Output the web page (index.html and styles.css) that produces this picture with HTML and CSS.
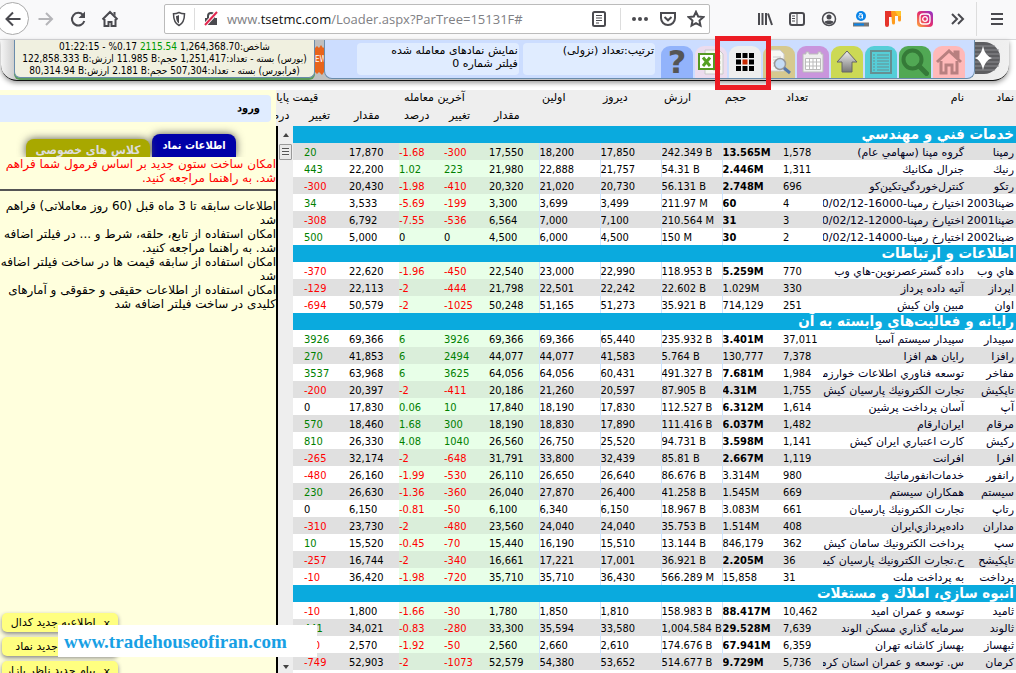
FILE: index.html
```
<!DOCTYPE html>
<html lang="fa">
<head>
<meta charset="utf-8">
<title>دیده بان بازار</title>
<link rel="stylesheet" href="styles.css">
</head>
<body>
<header class="browser">
  <div class="nav">
    <button class="back" aria-label="Back"><svg width="18" height="18" viewBox="0 0 18 18"><path d="M9 2.5 2.5 9 9 15.500M3 9h13.500" class="ln"/></svg></button>
    <button class="ib" aria-label="Forward"><svg width="18" height="18" viewBox="0 0 18 18"><path d="M9 3l6 6-6 6M15 9H1.500" class="ln pale"/></svg></button>
    <button class="ib" aria-label="Reload"><svg width="18" height="18" viewBox="0 0 18 18"><path d="M14 5a6.300 6.300 0 1 0 1.300 6" class="ln"/><path d="M16 1.500v6.500H9.500z" fill="#4a4a4f"/></svg></button>
    <button class="ib" aria-label="Home"><svg width="18" height="18" viewBox="0 0 18 18"><path d="M1.500 9.500 9 2l7.500 7.500M3.500 9v7h4v-4h3v4h4V9" class="ln"/><path d="M12.500 2h2v4l-2-2z" fill="#4a4a4f"/></svg></button>
  </div>
  <div class="urlbar">
    <svg width="14" height="16" viewBox="0 0 14 16"><path d="M7 1.500C5 2.500 3 2.800 1.500 2.800c0 6 1 9.500 5.500 11.700 4.500-2.200 5.500-5.700 5.500-11.700C11 2.800 9 2.500 7 1.500z" class="ln mid"/><path d="M7 4v8.500C4.800 11 4 8.500 4 5c1 0 2-.3 3-1z" fill="#4a4a4f"/></svg>
    <i class="bar"></i>
    <svg width="16" height="16" viewBox="0 0 16 16"><path d="M2 7h12v7H2z" fill="#4a4a4f"/><path d="M5 7V5a3 3 0 0 1 6 0v2" class="ln"/><path d="M2 14 14 1" stroke="#fff" stroke-width="4"/><path d="M2 14 14 1" stroke="#e22850" stroke-width="2"/></svg>
    <a class="address" href="#">www.<b>tsetmc.com</b>/Loader.aspx?ParTree=15131F#</a>
    <button class="ib sm" aria-label="Reader view"><svg width="16" height="16" viewBox="0 0 16 16"><rect x="2" y="1" width="12" height="14" rx="1.500" class="ln"/><path d="M5 4.500h6M5 7h6M5 9.500h6M5 12h3" class="ln thin"/></svg></button>
    <i class="bar short"></i>
    <button class="ib sm" aria-label="Page actions"><svg width="18" height="16" viewBox="0 0 18 16"><g fill="#4a4a4f"><circle cx="3" cy="8" r="2"/><circle cx="9" cy="8" r="2"/><circle cx="15" cy="8" r="2"/></g></svg></button>
    <button class="ib sm" aria-label="Save to Pocket"><svg width="16" height="16" viewBox="0 0 16 16"><path d="M1 2h14v5a7 7 0 0 1-14 0z" class="ln"/><path d="M4.500 6 8 9.300 11.500 6" class="ln"/></svg></button>
    <button class="ib sm" aria-label="Bookmark"><svg width="18" height="18" viewBox="0 0 18 18"><path d="M9 1.800l2.200 4.700 5.100.6-3.800 3.500 1 5.100L9 13.200l-4.500 2.500 1-5.100L1.700 7.100l5.100-.6z" class="ln"/></svg></button>
  </div>
  <div class="ext">
    <button class="ib sm" aria-label="Library"><svg width="16" height="16" viewBox="0 0 16 16"><path d="M2 2v12M5.500 2v12M9 2v12M11 2.500 15 14" class="ln"/></svg></button>
    <button class="ib sm" aria-label="Sidebars"><svg width="16" height="16" viewBox="0 0 16 16"><rect x="1" y="2" width="14" height="12" rx="2" class="ln"/><path d="M8 2v12M3 5h3M3 7.500h3M3 10h3" class="ln thin"/></svg></button>
    <button class="ib sm" aria-label="Account"><svg width="16" height="16" viewBox="0 0 16 16"><circle cx="8" cy="8" r="6.500" class="ln mid"/><circle cx="8" cy="6" r="2.500" fill="#4a4a4f"/><path d="M3.500 11c1-2 8-2 9 0-2 3-7 3-9 0z" fill="#4a4a4f"/></svg></button>
    <button class="ib sm" aria-label="Alexa"><svg width="16" height="16" viewBox="0 0 16 16"><circle cx="8" cy="5" r="5" fill="#0a84e8"/><circle cx="7.500" cy="5.500" r="1.700" fill="none" stroke="#fff"/><path d="M6 2.800q3.500-1 3.500 1.200v3.500" fill="none" stroke="#fff"/><path d="M0 11.500h16v4H0z" fill="#777"/><path d="M1 12.500h10v2H1z" fill="#0a84e8"/></svg></button>
    <button class="ib sm" aria-label="Metrics"><svg width="18" height="16" viewBox="0 0 18 16"><path d="M1 0h8v6H5v8a2 2 0 0 1-4 0z" fill="#e5342b"/><path d="M7 0h10v9a1.500 1.500 0 0 1-3 0V5h-3v7a1.500 1.500 0 0 1-3 0z" fill="#ff9c1c"/><path d="M11 0h6v5h-3z" fill="#ffc62c"/></svg></button>
    <button class="ib sm" aria-label="Instagram"><svg width="16" height="16" viewBox="0 0 16 16"><defs><linearGradient id="ig" x1="0" y1="1" x2="1" y2="0"><stop offset="0" stop-color="#ffb03a"/><stop offset=".5" stop-color="#e52d6e"/><stop offset="1" stop-color="#8b35d0"/></linearGradient></defs><rect width="16" height="16" rx="4" fill="url(#ig)"/><rect x="3" y="3" width="10" height="10" rx="3" fill="none" stroke="#fff" stroke-width="1.300"/><circle cx="8" cy="8" r="2.300" fill="none" stroke="#fff" stroke-width="1.300"/></svg></button>
    <button class="ib sm" aria-label="More tools"><svg width="16" height="16" viewBox="0 0 16 16"><path d="M3 3l5 5-5 5M9 3l5 5-5 5" class="ln"/></svg></button>
    <i class="bar tall"></i>
    <button class="ib sm" aria-label="Menu"><svg width="16" height="16" viewBox="0 0 16 16"><path d="M2 3h12M2 8h12M2 13h12" class="ln"/></svg></button>
  </div>
</header>

<section class="top">
  <div class="shell">
    <div class="stats" dir="rtl">
      <div>شاخص:<bdi>1,264,368.70</bdi> <bdi class="gain">2115.54</bdi> <bdi dir="ltr">%0.17</bdi> - <bdi dir="ltr">01:22:15</bdi></div>
      <div>(بورس) بسته - تعداد:<bdi>1,251,417</bdi> حجم:<bdi dir="ltr">11.985 B</bdi> ارزش:<bdi dir="ltr">122,858.333 B</bdi></div>
      <div>(فرابورس) بسته - تعداد:<bdi>507,304</bdi> حجم:<bdi dir="ltr">2.181 B</bdi> ارزش:<bdi dir="ltr">80,314.94 B</bdi></div>
    </div>
    <div class="burst"><svg width="14" height="32" viewBox="0 0 14 32"><path d="M0 3l2-2 2 2 2-3 2 3 3-2 3 2v24l-3 2-2-2-2 3-3-3-2 2-2-2z" fill="#e8641c"/></svg><span>EW</span></div>
    <div class="toolbar">
      <div class="info wide" dir="rtl">نمایش نمادهای معامله شده<br>فیلتر شماره 0</div>
      <div class="info" dir="rtl">ترتیب:تعداد (نزولی)</div>
      <div class="tools">
        <button class="t help" aria-label="راهنما">?</button>
        <button class="t excel" aria-label="اکسل"><svg width="26" height="26" viewBox="0 0 26 26"><path d="M7 1h14l4 4v20H7z" fill="#f6f6f2" stroke="#c8c8c8"/><path d="M15 6h7v4h-7zM15 12h7v3h-7zM15 17h7v4h-7z" fill="#e5efd5" stroke="#c5cfb5"/><rect x="1" y="5" width="15" height="15" fill="#fff" stroke="#559922" stroke-width="2"/><path d="M5 8.500 12 17M12 8.500 5 17" stroke="#55a022" stroke-width="3"/></svg></button>
        <button class="t view" aria-label="نمایش"><svg width="18" height="18" viewBox="0 0 18 18"><path d="M0 0h5v5H0zM6.500 0h5v5h-5zM13 0h5v5h-5zM0 6.500h5v5H0zM13 6.500h5v5h-5zM0 13h5v5H0zM6.500 13h5v5h-5zM13 13h5v5h-5z"/><path d="M6.500 6.500h5v5h-5z" fill="#c82800"/></svg></button>
        <button class="t find" aria-label="جستجو در صفحه"><svg width="26" height="26" viewBox="0 0 26 26"><path d="M4 1h10l4 4v17H4z" fill="#f7f7f4" stroke="#ccc"/><path d="M7 8h8M7 11h6M7 14h5M7 17h6" stroke="#ccc"/><circle cx="14" cy="15" r="5.500" fill="#c5dcf5" stroke="#999" stroke-width="1.500"/><path d="M18 19l6 5" stroke="#5577aa" stroke-width="3"/></svg></button>
        <button class="t cal" aria-label="تقویم"><svg width="24" height="24" viewBox="0 0 24 24"><path d="M2 4h3V2h3v2h9V2h3v2h2v18H2z" fill="#eee" stroke="#bbb"/><path d="M4.500 8.500h15v11h-15z" fill="#fff" stroke="#bbb"/><path d="M4.500 12h15M4.500 16h15M8.500 8.500v11M12 8.500v11M15.500 8.500v11" stroke="#bbb"/></svg></button>
        <button class="t asc" aria-label="بالا"><svg width="24" height="24" viewBox="0 0 24 24"><defs><linearGradient id="ar" x2="0" y2="1"><stop stop-color="#eee"/><stop offset="1" stop-color="#777"/></linearGradient></defs><path d="M12 1 22 12h-5v10H7V12H2z" fill="url(#ar)" stroke="#666"/></svg></button>
        <button class="t list" aria-label="فهرست"><svg width="24" height="24" viewBox="0 0 24 24"><rect x="2" y="1" width="20" height="22" fill="none" stroke="#668f92" stroke-width="2"/><path d="M8 5h12M8 8h12M8 11h12M8 14h12M8 17h12M8 20h12M4 5h2M4 8h2M4 11h2M4 14h2M4 17h2M4 20h2" stroke="#668f92"/></svg></button>
        <button class="t search" aria-label="جستجو"><svg width="28" height="28" viewBox="0 0 28 28"><circle cx="11.500" cy="11.500" r="9" fill="none" stroke="#357a38" stroke-width="4"/><path d="M18 18l7.500 7.500" stroke="#357a38" stroke-width="5" stroke-linecap="round"/></svg></button>
        <button class="t home" aria-label="خانه"><svg width="28" height="26" viewBox="0 0 28 26"><path d="M2 13 14 2l12 11M20 7V3h3v7" fill="none" stroke="#b88080" stroke-width="3"/><path d="M6 12v12h5v-8h6v8h5V12" fill="none" stroke="#b88080" stroke-width="3"/></svg></button>
      </div>
    </div>
    <div class="seal"><svg width="28" height="34" viewBox="0 0 28 34"><path d="M0 1h9a16 16 0 0 1 0 32H0z" fill="#5d5d60"/><path d="M0 5h20M0 9h24M0 13h25M0 17h25M0 21h25M0 25h24M0 29h20" stroke="#8d8d90"/><path d="M8 5q2 10 9 12-7 2-9 12Q6 19 0 17 6 15 8 5z" fill="#fff"/></svg></div>
  </div>
</section>

<main class="page">
  <aside class="side" dir="rtl">
    <button class="login">ورود</button>
    <div class="tabs"><button class="tab on">اطلاعات نماد</button><button class="tab">کلاس های خصوصی</button></div>
    <div class="news">
      <p class="hot">امکان ساخت ستون جدید بر اساس فرمول شما فراهم شد. به راهنما مراجعه کنید.</p>
      <hr>
      <p>اطلاعات سابقه تا 3 ماه قبل (60 روز معاملاتی) فراهم شد</p>
      <p>امکان استفاده از تابع، حلقه، شرط و ... در فیلتر اضافه شد. به راهنما مراجعه کنید.</p>
      <p>امکان استفاده از سابقه قیمت ها در ساخت فیلتر اضافه شد</p>
      <p>امکان استفاده از اطلاعات حقیقی و حقوقی و آمارهای کلیدی در ساخت فیلتر اضافه شد</p>
    </div>
    <div class="notes">
      <div class="note"><button aria-label="بستن">x</button><span>اطلاعیه جدید کدال</span></div>
      <div class="note"><button aria-label="بستن">x</button><span>اطلاعیه جدید نماد</span></div>
      <div class="note"><button aria-label="بستن">x</button><span>پیام جدید ناظر بازار</span></div>
    </div>
  </aside>
  <section class="grid" dir="rtl">
    <table>
      <colgroup><col class="w50"><col><col class="w40"><col class="w61"><col class="w61"><col class="w61"><col class="w61"><col class="w50"><col class="w45"><col class="w45"><col class="w50"><col class="w45"><col class="w45"></colgroup>
      <thead>
        <tr><th class="r">نماد<th class="r">نام<th>تعداد<th>حجم<th>ارزش<th>دیروز<th>اولین<th colspan="3">آخرین معامله<th colspan="3">قیمت پایانی</tr>
        <tr><th><th><th><th><th><th><th><th>مقدار<th>تغییر<th>درصد<th>مقدار<th>تغییر<th>درصد</tr>
      </thead>
      <tbody>
        <tr class="g"><td colspan="13">خدمات فني و مهندسي</tr>
        <tr><td>رمپنا<td>گروه مپنا (سهامي عام)<td>1,578<td class="b">13.565M<td>242.349 B<td>17,850<td>18,200<td>17,550<td class="dn">-300<td class="dn">-1.68<td>17,870<td class="up">20<td></tr>
        <tr><td>رنيك<td>جنرال مكانيك<td>1,311<td class="b">2.446M<td>54.31 B<td>21,757<td>22,888<td>21,980<td class="up">223<td class="up">1.02<td>22,200<td class="up">443<td></tr>
        <tr><td>رتكو<td>كنترل‌خوردگي‌تكين‌كو<td>696<td class="b">2.748M<td>56.131 B<td>20,730<td>21,020<td>20,320<td class="dn">-410<td class="dn">-1.98<td>20,430<td class="dn">-300<td></tr>
        <tr><td>ضپنا2003<td>اختيارخ رمپنا-16000-1400/02/12<td>4<td class="b">60<td>211.97 M<td>3,499<td>3,699<td>3,300<td class="dn">-199<td class="dn">-5.69<td>3,533<td class="up">34<td></tr>
        <tr><td>ضپنا2001<td>اختيارخ رمپنا-12000-1400/02/12<td>3<td class="b">31<td>210.564 M<td>7,100<td>7,000<td>6,564<td class="dn">-536<td class="dn">-7.55<td>6,792<td class="dn">-308<td></tr>
        <tr><td>ضپنا2002<td>اختيارخ رمپنا-14000-1400/02/12<td>2<td class="b">30<td>150 M<td>4,500<td>6,000<td>4,500<td>0<td>0<td>5,000<td class="up">500<td></tr>
        <tr class="g"><td colspan="13">اطلاعات و ارتباطات</tr>
        <tr><td>هاي وب<td>داده گسترعصرنوين-هاي وب<td>770<td class="b">5.259M<td>118.953 B<td>22,990<td>23,000<td>22,540<td class="dn">-450<td class="dn">-1.96<td>22,620<td class="dn">-370<td></tr>
        <tr><td>اپرداز<td>آتيه داده پرداز<td>330<td>1.029M<td>22.602 B<td>22,242<td>22,501<td>21,798<td class="dn">-444<td class="dn">-2<td>22,113<td class="dn">-129<td></tr>
        <tr><td>اوان<td>مبين وان كيش<td>251<td>714,129<td>35.921 B<td>51,273<td>51,165<td>50,248<td class="dn">-1025<td class="dn">-2<td>50,579<td class="dn">-694<td></tr>
        <tr class="g"><td colspan="13">رايانه و فعاليت‌هاي وابسته به آن</tr>
        <tr><td>سپيدار<td>سپيدار سيستم آسيا<td>37,011<td class="b">3.401M<td>235.932 B<td>65,440<td>69,366<td>69,366<td class="up">3926<td class="up">6<td>69,366<td class="up">3926<td></tr>
        <tr><td>رافزا<td>رايان هم افزا<td>7,378<td>130,777<td>5.764 B<td>41,583<td>44,077<td>44,077<td class="up">2494<td class="up">6<td>41,853<td class="up">270<td></tr>
        <tr><td>مفاخر<td>توسعه فناوري اطلاعات خوارزمي<td>1,984<td class="b">7.681M<td>491.327 B<td>60,431<td>64,056<td>64,056<td class="up">3625<td class="up">6<td>63,968<td class="up">3537<td></tr>
        <tr><td>تاپكيش<td>تجارت الكترونيك پارسيان كيش<td>1,755<td class="b">4.31M<td>87.905 B<td>20,597<td>21,260<td>20,186<td class="dn">-411<td class="dn">-2<td>20,397<td class="dn">-200<td></tr>
        <tr><td>آپ<td>آسان پرداخت پرشين<td>1,614<td class="b">6.312M<td>112.527 B<td>17,830<td>18,190<td>17,840<td class="up">10<td class="up">0.06<td>17,830<td>0<td></tr>
        <tr><td>مرقام<td>ايران‌ارقام<td>1,482<td class="b">6.037M<td>111.416 B<td>17,890<td>18,830<td>18,190<td class="up">300<td class="up">1.68<td>18,460<td class="up">570<td></tr>
        <tr><td>ركيش<td>كارت اعتباري ايران كيش<td>1,141<td class="b">3.598M<td>94.731 B<td>25,520<td>26,750<td>26,560<td class="up">1040<td class="up">4.08<td>26,330<td class="up">810<td></tr>
        <tr><td>افرا<td>افرانت<td>1,119<td class="b">2.667M<td>85.81 B<td>32,439<td>33,800<td>31,791<td class="dn">-648<td class="dn">-2<td>32,174<td class="dn">-265<td></tr>
        <tr><td>رانفور<td>خدمات‌انفورماتيك<td>980<td>3.314M<td>86.676 B<td>26,640<td>26,650<td>26,110<td class="dn">-530<td class="dn">-1.99<td>26,160<td class="dn">-480<td></tr>
        <tr><td>سيستم<td>همكاران سيستم<td>669<td>1.545M<td>41.258 B<td>26,400<td>27,870<td>26,040<td class="dn">-360<td class="dn">-1.36<td>26,630<td class="up">230<td></tr>
        <tr><td>رتاپ<td>تجارت الكترونيك پارسيان<td>661<td>3.083M<td>18.967 B<td>6,150<td>6,340<td>6,100<td class="dn">-50<td class="dn">-0.81<td>6,150<td>0<td></tr>
        <tr><td>مداران<td>داده‌پردازي‌ايران<td>408<td>1.514M<td>35.753 B<td>24,040<td>24,040<td>23,560<td class="dn">-480<td class="dn">-2<td>23,730<td class="dn">-310<td></tr>
        <tr><td>سپ<td>پرداخت الكترونيك سامان كيش<td>362<td>846,179<td>13.144 B<td>15,510<td>16,190<td>15,440<td class="dn">-70<td class="dn">-0.45<td>15,520<td class="up">10<td></tr>
        <tr><td>تاپكيشح<td>ح.تجارت الكترونيك پارسيان كيش<td>36<td class="b">2.205M<td>36.921 B<td>17,001<td>17,221<td>16,661<td class="dn">-340<td class="dn">-2<td>16,744<td class="dn">-257<td></tr>
        <tr><td>پرداخت<td>به پرداخت ملت<td>31<td>15,858<td>566.289 M<td>36,430<td>35,710<td>35,710<td class="dn">-720<td class="dn">-1.98<td>36,420<td class="dn">-10<td></tr>
        <tr class="g"><td colspan="13">انبوه سازي، املاك و مستغلات</tr>
        <tr><td>ثاميد<td>توسعه و عمران اميد<td>10,462<td class="b">88.417M<td>158.983 B<td>1,810<td>1,850<td>1,780<td class="dn">-30<td class="dn">-1.66<td>1,800<td class="dn">-10<td></tr>
        <tr><td>ثالوند<td>سرمايه گذاري مسكن الوند<td>7,639<td class="b">29.528M<td>1,004.584 B<td>33,580<td>35,594<td>33,300<td class="dn">-280<td class="dn">-0.83<td>34,021<td class="up">441<td></tr>
        <tr><td>ثبهساز<td>بهساز كاشانه تهران<td>6,359<td class="b">67.941M<td>174.676 B<td>2,610<td>2,660<td>2,560<td class="dn">-50<td class="dn">-1.92<td>2,570<td class="dn">-40<td></tr>
        <tr><td>كرمان<td>س. توسعه و عمران استان كرمان<td>5,736<td class="b">9.729M<td>514.677 B<td>53,652<td>54,380<td>52,579<td class="dn">-1073<td class="dn">-2<td>52,903<td class="dn">-749<td></tr>
      </tbody>
    </table>
    <div class="scroll"><i class="tri"></i><i class="thumb"></i><i class="tri down"></i></div>
  </section>
  <a class="mark" href="#">www.tradehouseofiran.com</a>
</main>
</body>
</html>
```
FILE: styles.css
```
* { box-sizing: border-box; }
html, body { height: 100%; }
body {
  margin: 0;
  display: flex;
  flex-direction: column;
  overflow: hidden;
  background: #fff;
  color: #000;
  font: 11px/14px "DejaVu Sans Condensed", "DejaVu Sans", sans-serif;
}
button { font: inherit; border: 0; padding: 0; background: none; color: inherit; cursor: pointer; }
a { color: inherit; text-decoration: none; }
svg { display: block; flex: none; }
p { margin: 0; }

/* browser chrome */
.browser {
  flex: none;
  display: flex;
  align-items: center;
  height: 40px;
  padding: 0 10px 2px 0;
  background: #f9f9fa;
  border-bottom: 1px solid #d8d8da;
}
.ln { fill: none; stroke: #4a4a4f; stroke-width: 2; }
.ln.thin { stroke-width: 1; }
.ln.mid { stroke-width: 1.5; }
.ln.pale { stroke: #b5b5b8; }
.nav { display: flex; align-items: center; gap: 14px; width: 164px; }
.back {
  display: flex;
  align-items: center;
  justify-content: center;
  width: 33px;
  height: 33px;
  margin-left: -4px;
  margin-right: -6px;
  border: 1px solid #aaa;
  border-radius: 50%;
  background: #fff;
}
.ib { width: 18px; display: flex; justify-content: center; }
.urlbar {
  flex: 1;
  display: flex;
  align-items: center;
  gap: 8px;
  height: 30px;
  padding: 0 4px 0 7px;
  background: #fff;
  border: 1px solid #bbb;
  border-radius: 2px;
}
.bar { width: 1px; height: 22px; background: #ddd; }
.bar.short { margin: 0 0 0 4px; }
.bar.tall { height: 34px; margin: 0 -3px 0 -4px; }
.address { flex: 1; color: #808084; font: 13px/20px "Open Sans", sans-serif; }
.address b { font-weight: normal; color: #111; }
.ib.sm { height: 18px; align-items: center; }
.urlbar .ib { margin-left: 2px; }
.ext { display: flex; align-items: center; gap: 14px; padding-left: 46px; }

/* market summary and tools */
.top { flex: none; height: 50px; padding: 0 7px 9px 1px; background: #fff; }
.shell {
  display: flex;
  height: 41px;
  padding-left: 13px;
  background: linear-gradient(90deg, #f4f4f4, #bbb 2%, #c4c4c4 70%, #f0f0f0);
  border-bottom: 1px solid #111;
  border-radius: 0 0 16px 16px;
  box-shadow: 0 2px 5px #999;
}
.stats {
  width: 301px;
  height: 38px;
  padding-top: 1px;
  background: #f0f0e0;
  border: 1px solid #6a8cab;
  border-top: 0;
  border-radius: 0 0 6px 6px;
  text-align: center;
  font-size: 10px;
  line-height: 12px;
  white-space: nowrap;
  box-shadow: 0 2px 0 #5b9c5b;
}
.gain { color: #090; }
.burst { position: relative; width: 9px; padding-top: 5px; overflow: hidden; }
.burst span { position: absolute; top: 16px; left: 0; color: #fff; font-size: 8px; line-height: 8px; }
.toolbar {
  flex: 1;
  display: flex;
  gap: 4px;
  height: 39px;
  padding: 3px 9px 0 32px;
  background: #cdf;
  border: 1px solid #6a8cab;
  border-top: 0;
  border-radius: 0 0 8px 8px;
}
.info { flex: 132; height: 32px; padding: 1px; background: #e0ecff; border-radius: 4px; font-family: "DejaVu Sans", sans-serif; line-height: 13px; }
.info.wide { flex: 162; }
.tools { display: flex; gap: 2px; padding: 3px 0 0 2px; }
.t {
  position: relative;
  width: 32px;
  height: 32px;
  display: flex;
  align-items: center;
  justify-content: center;
  border-radius: 9px 9px 0 0;
}
.help { background: #92b3fb; color: #555; font: bold 32px/32px "DejaVu Sans", sans-serif; }
.excel { background: #ecdcee; }
.view { background: #eee; }
.view::after {
  content: "";
  position: absolute;
  left: -14px;
  top: -10px;
  box-sizing: border-box;
  width: 56px;
  height: 54px;
  border: 5px solid #ed1c24;
  z-index: 2;
}
.find { background: #d6c98f; }
.cal { background: #c995dc; }
.asc { background: #ccd954; }
.list { background: #55ced8; }
.search { background: #51a854; }
.home { background: #ffb9b9; }
.seal { width: 34px; padding-top: 1px; }

/* page body */
.page { flex: 1; display: flex; min-height: 0; position: relative; }
.side {
  width: 276px;
  flex: none;
  display: flex;
  flex-direction: column;
  background: #ffffdd;
  overflow: hidden;
}
.login {
  height: 27px;
  margin: 5px 0 0;
  margin-right: 5px;
  padding-right: 11px;
  background: #e0ecff;
  border-radius: 0 4px 4px 0;
  font-weight: bold;
  text-align: right;
}
.tabs {
  display: flex;
  align-items: flex-end;
  gap: 2px;
  height: 35px;
  padding-right: 40px;
  overflow: hidden;
}
.tab {
  width: 124px;
  height: 18px;
  padding-top: 4px;
  border-radius: 8px 8px 0 0;
  background: #a8a800;
  color: #ddd;
  font-weight: bold;
  font-size: 12px;
  white-space: nowrap;
  box-shadow: 0 0 8px #555;
}
.tab.on { width: 84px; height: 23px; padding-top: 0; background: #0000a8; color: #fff; font-size: 11px; }
.news { font: 12px/14px "DejaVu Sans", sans-serif; }
.hot { color: red; }
.news hr { height: 2px; margin: 4px 0 8px; border: 0; background: #555; }
.notes { flex: none; width: 118px; margin: auto auto 0 0; padding-left: 1px; height: 60px; }
.note {
  display: flex;
  gap: 8px;
  width: 116px;
  height: 19px;
  margin-bottom: 5px;
  padding: 3px 8px 0 0;
  background: #ffff80;
  border-radius: 5px;
  box-shadow: 0 2px 4px #888;
  font-family: "DejaVu Sans", sans-serif;
  white-space: nowrap;
}

.grid { flex: 1; position: relative; min-width: 0; overflow: hidden; background: #fff; }
table { table-layout: fixed; width: calc(100% + 17px); border-collapse: collapse; }
.w40 { width: 40px; }
.w45 { width: 45px; }
.w50 { width: 50px; }
.w61 { width: 61px; }
th, td { padding: 0; white-space: nowrap; overflow: hidden; font-weight: normal; }
th { height: 18px; line-height: 16px; padding: 0 0 2px 3px; background: #eee; text-align: left; font-family: "DejaVu Sans", sans-serif; }
th:nth-child(n+8) { padding-left: 5px; }
th.r { text-align: right; padding: 0 2px 2px 0; }
td { height: 17px; padding-top: 2px; line-height: 15px; direction: ltr; text-align: left; }
td:nth-child(-n+2) { direction: rtl; text-align: right; padding-right: 2px; color: #002; font-family: "DejaVu Sans", sans-serif; }
tbody tr:nth-child(even) { background: #e0e0e0; }
td:nth-child(n+4):nth-child(-n+7) { border-left: 1px solid #cce4ff; }
td:nth-child(n+8):nth-child(-n+10) { background: #e8ffe8; }
tr:nth-child(even) td:nth-child(n+8):nth-child(-n+10) { background: #daeeda; }
td.b { font-weight: bold; }
td.up { color: #008000; }
td.dn { color: red; }
tbody tr.g { background: #0aaade; }
tr.g td:first-child {
  padding-top: 0;
  color: #fff;
  font: bold 15px/17px "DejaVu Sans Condensed", "DejaVu Sans", sans-serif;
}

.scroll {
  position: absolute;
  left: 0;
  top: 36px;
  bottom: 0;
  width: 17px;
  display: flex;
  flex-direction: column;
  align-items: center;
  background: #eee;
  border-left: 2px solid #000;
}
.tri { margin-top: 7px; border: 3px solid transparent; border-top: 0; border-bottom: 4px solid #444; }
.tri.down { margin: auto 0 4px; border: 3px solid transparent; border-bottom: 0; border-top: 4px solid #444; }
.thumb {
  width: 13px;
  height: 16px;
  margin-top: 7px;
  border: 1px solid #999;
  border-radius: 1px;
  background: repeating-linear-gradient(#555 0 1px, #eee 1px 3px) center / 7px 8px no-repeat, #e8e8e8;
}

.mark {
  position: absolute;
  left: 58px;
  bottom: 16px;
  width: 259px;
  height: 32px;
  padding-left: 6px;
  background: #fff;
  color: #18a0e4;
  font: bold 19px/34px "Liberation Serif", serif;
}
```
